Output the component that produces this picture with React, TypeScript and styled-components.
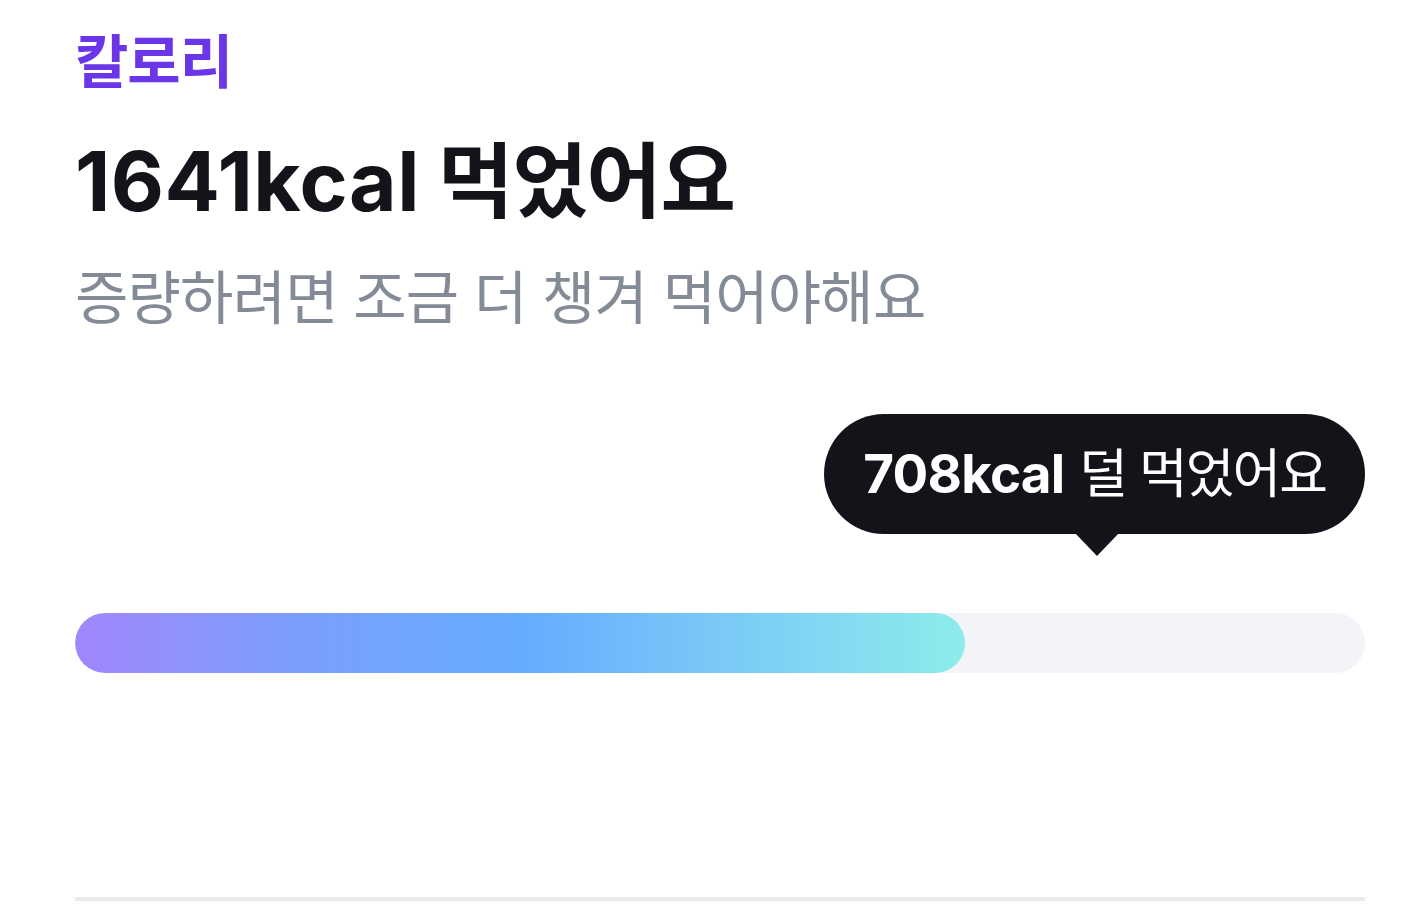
import styled, { createGlobalStyle } from 'styled-components';

const GlobalStyle = createGlobalStyle`
    html, body {
        margin: 0;
        padding: 0;
        background: #ffffff;
    }
    body {
        font-family: Inter, "Noto Sans CJK KR", sans-serif;
        color: #191f28;
    }
`;

const eaten = 1641;
const remain = 708;

const App = () => {
    // bar in the design stops a bit short of the exact ratio
    const percent = 69;

    return (
        <>
            <GlobalStyle />
            <Section>
                <Label>칼로리</Label>
                <Title>
                    <Num>{eaten}kcal</Num> 먹었어요
                </Title>
                <Sub>증량하려면 조금 더 챙겨 먹어야해요</Sub>
                <TipRow>
                    <Bubble>
                        <strong>{remain}kcal</strong> <Ko>덜 먹었어요</Ko>
                        <Arrow />
                    </Bubble>
                </TipRow>
                <Track>
                    <Fill style={{ width: `${percent}%` }} />
                </Track>
                <Divider />
            </Section>
        </>
    );
};

export default App;

const Section = styled.section`
    display: flex;
    flex-direction: column;
    width: 1290px;
    margin-left: 75px;
    padding-top: 24px;
`;

const Label = styled.h3`
    margin: 0;
    font-size: 58px;
    line-height: 76px;
    font-weight: 700;
    color: #6b35e8;
    letter-spacing: -1px;
`;

const Title = styled.h1`
    margin: 32px 0 0;
    font-size: 82px;
    line-height: 100px;
    font-weight: 700;
    color: #121419;
    letter-spacing: -1.3px;
`;

const Num = styled.span`
    letter-spacing: 0.5px;
`;

const Sub = styled.p`
    margin: 31px 0 0;
    font-size: 58px;
    line-height: 70px;
    font-weight: 400;
    color: #848b96;
    letter-spacing: -0.8px;
`;

const TipRow = styled.div`
    display: flex;
    justify-content: flex-end;
    margin-top: 81px;
`;

const Bubble = styled.div`
    position: relative;
    height: 120px;
    padding: 0 39px 0 39px;
    box-sizing: border-box;
    border-radius: 60px;
    background: #121419;
    color: #ffffff;
    font-size: 53px;
    line-height: 120px;
    font-weight: 400;
    white-space: nowrap;

    strong {
        font-weight: 700;
        letter-spacing: -0.8px;
    }
`;

const Ko = styled.span`
    letter-spacing: -2px;
`;

const Arrow = styled.span`
    position: absolute;
    left: 251px;
    bottom: -22px;
    width: 0;
    height: 0;
    border-left: 22px solid transparent;
    border-right: 22px solid transparent;
    border-top: 23px solid #121419;
`;

const Track = styled.div`
    margin-top: 79px;
    height: 60px;
    border-radius: 30px;
    background: #f2f4f7;
    overflow: hidden;
`;

const Fill = styled.div`
    height: 100%;
    border-radius: 30px;
    background: linear-gradient(90deg, #a087fd 0%, #7c9efd 25%, #64acff 50%, #78c6f8 70%, #8eeceb 100%);
`;

const Divider = styled.hr`
    margin: 224px 0 0;
    border: none;
    height: 4px;
    background: #e8eaed;
`;
